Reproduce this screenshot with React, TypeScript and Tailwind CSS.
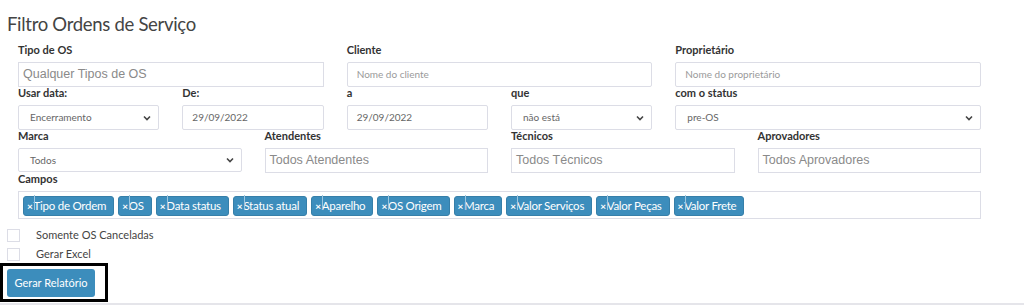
import React from "react";

const SS = { fontFamily: "Lato, 'Noto Sans', sans-serif" };

function Label({ children }: { children: React.ReactNode }) {
  return (
    <div className="h-[18px] text-[11px] font-bold leading-[12px] text-[#333]">{children}</div>
  );
}

function Chevron() {
  return (
    <svg width="10" height="10" viewBox="0 0 10 10" className="shrink-0">
      <path d="M2 3.5 L5 6.5 L8 3.5" fill="none" stroke="#444" strokeWidth="1.6" />
    </svg>
  );
}

function Select({ value, h = "h-[25px]" }: { value: string; h?: string }) {
  return (
    <div className={`flex ${h} items-center justify-between rounded-[2px] border border-[#dcdde6] bg-white pl-[11px] pr-[6px] text-[10px] text-[#666]`}>
      <span>{value}</span>
      <Chevron />
    </div>
  );
}

function SmallInput({ value, muted }: { value: string; muted?: boolean }) {
  return (
    <div className={`flex h-[25px] items-center rounded-[2px] border border-[#dcdde6] bg-white pl-[9px] text-[10px] ${muted ? "text-[#9a9a9a]" : "text-[#666]"}`}>
      {value}
    </div>
  );
}

function BigInput({ value }: { value: string }) {
  return (
    <div
      className="flex h-[25px] items-center border border-[#dcdde6] bg-white pl-[4px] text-[12.5px] text-[#8a8a8a]"
      style={{ fontFamily: "'Liberation Sans', Arial, sans-serif" }}
    >
      {value}
    </div>
  );
}

function Tag({ text }: { text: string }) {
  return (
    <div className="flex h-[20px] items-center rounded-[3px] border border-[#367fa9] bg-[#3c8dbc] pl-[3px] pr-[7px] text-[11.5px] tracking-[-0.25px] text-white">
      <span className="text-[10px] font-bold leading-none">×</span>
      <span className="relative pl-[1px]">
        <span className="absolute left-[1.5px] top-[-2px] h-[15px] w-px bg-[#9cc6e0]" />
        {text}
      </span>
    </div>
  );
}

export default function App() {
  const tags = [
    "Tipo de Ordem",
    "OS",
    "Data status",
    "Status atual",
    "Aparelho",
    "OS Origem",
    "Marca",
    "Valor Serviços",
    "Valor Peças",
    "Valor Frete",
  ];
  return (
    <div className="h-[305px] w-[1024px] overflow-hidden border-b-2 border-[#e5e5ea] bg-white text-[#333]" style={SS}>
      <div className="flex h-[44px] items-start pl-[7px] pt-[12px] text-[18.5px] leading-[24px] tracking-[-0.3px] text-[#444]">
        Filtro Ordens de Serviço
      </div>
      <div className="w-[981px] pl-[18px]">
        <div className="grid grid-cols-3 gap-x-[23px]">
          <div>
            <Label>Tipo de OS</Label>
            <BigInput value="Qualquer Tipos de OS" />
          </div>
          <div>
            <Label>Cliente</Label>
            <SmallInput value="Nome do cliente" muted />
          </div>
          <div>
            <Label>Proprietário</Label>
            <SmallInput value="Nome do proprietário" muted />
          </div>
        </div>
        <div className="grid grid-cols-6 gap-x-[23px]">
          <div>
            <Label>Usar data:</Label>
            <Select value="Encerramento" />
          </div>
          <div>
            <Label>De:</Label>
            <SmallInput value="29/09/2022" />
          </div>
          <div>
            <Label>a</Label>
            <SmallInput value="29/09/2022" />
          </div>
          <div>
            <Label>que</Label>
            <Select value="não está" />
          </div>
          <div className="col-span-2">
            <Label>com o status</Label>
            <Select value="pre-OS" />
          </div>
        </div>
        <div className="grid grid-cols-4 gap-x-[23px]">
          <div>
            <Label>Marca</Label>
            <Select value="Todos" h="h-[24px]" />
          </div>
          <div>
            <Label>Atendentes</Label>
            <BigInput value="Todos Atendentes" />
          </div>
          <div>
            <Label>Técnicos</Label>
            <BigInput value="Todos Técnicos" />
          </div>
          <div>
            <Label>Aprovadores</Label>
            <BigInput value="Todos Aprovadores" />
          </div>
        </div>
        <div>
          <Label>Campos</Label>
          <div className="flex h-[28px] items-center gap-[4px] border border-[#dcdde6] pl-[4px] pt-[1px]">
            {tags.map((t) => (
              <Tag key={t} text={t} />
            ))}
          </div>
        </div>
      </div>
      <div className="mt-[10px] flex flex-col gap-[6px] pl-[7px] text-[11px] text-[#444]">
        <div className="flex h-[13px] items-center">
          <div className="h-[13px] w-[13px] border border-[#dcdde6]" />
          <span className="ml-[16px]">Somente OS Canceladas</span>
        </div>
        <div className="flex h-[13px] items-center">
          <div className="h-[13px] w-[13px] border border-[#dcdde6]" />
          <span className="ml-[16px]">Gerar Excel</span>
        </div>
      </div>
      <div className="mt-[2px] w-[108px] border-[3px] border-black pb-[2px] pl-[4px] pt-[3px]">
        <div className="flex h-[28px] w-[88px] items-center justify-center rounded-[3px] bg-[#3c8dbc] text-[11px] text-white">
          Gerar Relatório
        </div>
      </div>
    </div>
  );
}
